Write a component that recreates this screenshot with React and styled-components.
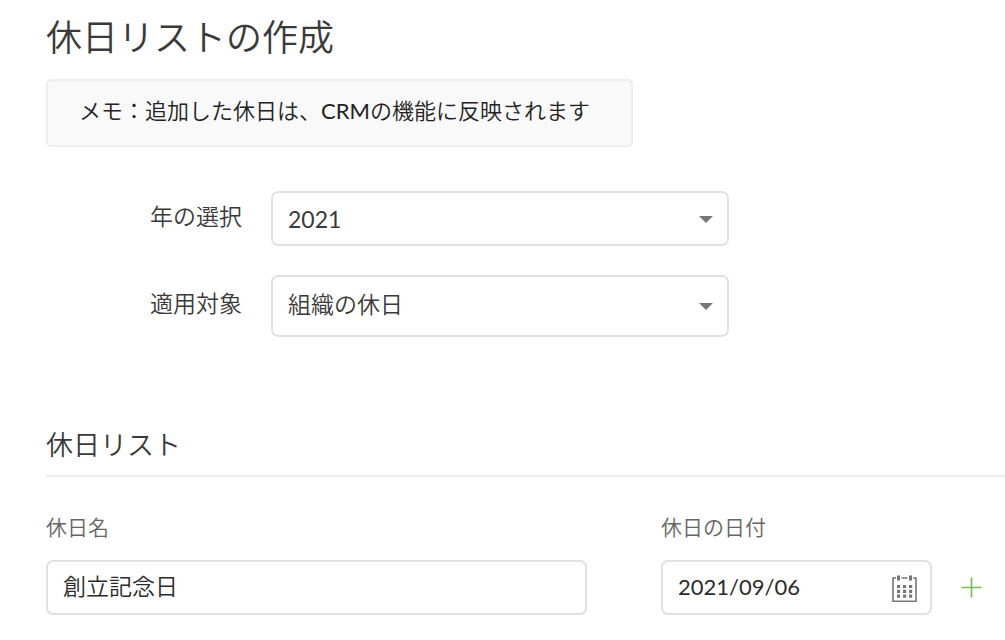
import { useState } from 'react';
import styled, { createGlobalStyle } from 'styled-components';

const GlobalStyle = createGlobalStyle`
    * {
        box-sizing: border-box;
    }

    body {
        margin: 0;
        background: #fff;
        color: #3a3a3a;
        font-family: Lato, 'Noto Sans CJK JP', sans-serif;
        font-size: 23px;
        font-weight: 350;
    }

    input,
    select,
    button {
        font: inherit;
        color: inherit;
    }
`;

const Page = styled.main`
    padding: 13px 0 25px 46px;
`;

const PageTitle = styled.h1`
    margin: 0;
    font-size: 36px;
    font-weight: 350;
    line-height: 48px;
`;

const Note = styled.p`
    width: fit-content;
    margin: 18px 0 0;
    padding: 12px 41px 16px 31px;
    border: 2px solid #eee;
    border-radius: 5px;
    background: #f9f9f9;
    color: #222;
    font-size: 22px;
    line-height: 36px;
`;

const Latin = styled.span`
    font-weight: 400;
`;

const SettingForm = styled.div`
    display: flex;
    flex-direction: column;
    gap: 29px;
    margin-top: 44px;
`;

const SettingRow = styled.div`
    display: grid;
    grid-template-columns: 196px minmax(0, 458px);
    align-items: center;
    column-gap: 29px;
`;

const SettingLabel = styled.label`
    padding-bottom: 8px;
    text-align: right;
`;

const SelectWrapper = styled.div`
    position: relative;
`;

const Select = styled.select`
    display: block;
    width: 100%;
    height: ${({ $tall }) => ($tall ? '62px' : '55px')};
    padding: ${({ $tall }) => ($tall ? '0 48px 4px 15px' : '0 48px 0 15px')};
    border: 2px solid #e1e1e1;
    border-radius: 7px;
    background: #fff;
    font-weight: ${({ $tall }) => ($tall ? 350 : 400)};
    appearance: none;
`;

const SelectArrow = styled.span`
    position: absolute;
    top: 50%;
    right: 16px;
    margin-top: -3px;
    border-top: 7px solid #777;
    border-right: 7px solid transparent;
    border-left: 7px solid transparent;
    pointer-events: none;
`;

const SectionTitle = styled.h2`
    margin: 89px 0 0;
    padding-bottom: 11px;
    border-bottom: 2px solid #ececec;
    font-size: 27px;
    font-weight: 350;
    line-height: 38px;
`;

const HolidayRow = styled.div`
    display: flex;
    align-items: flex-end;
    margin-top: 34px;
    padding-right: 23px;
`;

const Field = styled.div`
    display: flex;
    flex-direction: column;
    gap: 18px;
`;

const NameField = styled(Field)`
    flex: 1;
    min-width: 0;
    margin-right: 74px;
`;

const DateField = styled(Field)`
    width: 271px;
    margin-right: 29px;
`;

const FieldLabel = styled.label`
    color: #666;
    font-size: 21px;
    line-height: 31px;
`;

const InputBox = styled.div`
    display: flex;
    align-items: center;
    height: 55px;
    padding: 0 13px 0 15px;
    border: 2px solid #e1e1e1;
    border-radius: 7px;
`;

const Input = styled.input`
    flex: 1;
    width: 100%;
    min-width: 0;
    padding: 0 0 ${({ $japanese }) => ($japanese ? '6px' : '2px')};
    border: 0;
    background: transparent;
    color: #2b2b2b;
    font-size: ${({ $japanese }) => ($japanese ? '23px' : '22px')};
    font-weight: ${({ $japanese }) => ($japanese ? 350 : 400)};
    outline: none;
`;

const IconButton = styled.button`
    display: flex;
    align-items: center;
    flex-shrink: 0;
    padding: 0;
    border: 0;
    background: none;
    cursor: pointer;
`;

const CalendarButton = styled(IconButton)`
    padding-top: 2px;
`;

const AddButton = styled(IconButton)`
    height: 55px;
`;

function CalendarIcon() {
    return (
        <svg width="25" height="28" viewBox="0 0 25 28" fill="none">
            <path d="M4 3H1v23.3h23V3h-3M9.500 3h6" stroke="#777" strokeWidth="1.6" />
            <path d="M6.500 0.500v5M18.500 0.500v5" stroke="#777" strokeWidth="3" />
            {[11.5, 16.3, 21.1].map(y => (
                <path key={y} d={`M5 ${y}h3.2M11 ${y}h3.2M17 ${y}h3.2`} stroke="#777" strokeWidth="3.2" />
            ))}
        </svg>
    );
}

function PlusIcon() {
    return (
        <svg width="21" height="21" viewBox="0 0 21 21" fill="none">
            <path d="M10.5 0.5v20M0.5 10.5h20" stroke="#7dbd50" strokeWidth="1.7" />
        </svg>
    );
}

export default function HolidayListPage() {
    const [year, setYear] = useState('2021');
    const [target, setTarget] = useState('organization');
    const [name, setName] = useState('創立記念日');
    const [date, setDate] = useState('2021/09/06');

    return (
        <>
            <GlobalStyle />
            <Page>
                <PageTitle>休日リストの作成</PageTitle>
                <Note>
                    メモ：追加した休日は、<Latin>CRM</Latin>の機能に反映されます
                </Note>
                <SettingForm>
                    <SettingRow>
                        <SettingLabel htmlFor="year">年の選択</SettingLabel>
                        <SelectWrapper>
                            <Select id="year" value={year} onChange={e => setYear(e.target.value)}>
                                <option value="2021">2021</option>
                            </Select>
                            <SelectArrow />
                        </SelectWrapper>
                    </SettingRow>
                    <SettingRow>
                        <SettingLabel htmlFor="target">適用対象</SettingLabel>
                        <SelectWrapper>
                            <Select
                                id="target"
                                $tall
                                value={target}
                                onChange={e => setTarget(e.target.value)}
                            >
                                <option value="organization">組織の休日</option>
                            </Select>
                            <SelectArrow />
                        </SelectWrapper>
                    </SettingRow>
                </SettingForm>
                <SectionTitle>休日リスト</SectionTitle>
                <HolidayRow>
                    <NameField>
                        <FieldLabel htmlFor="holiday-name">休日名</FieldLabel>
                        <InputBox>
                            <Input
                                id="holiday-name"
                                $japanese
                                value={name}
                                onChange={e => setName(e.target.value)}
                            />
                        </InputBox>
                    </NameField>
                    <DateField>
                        <FieldLabel htmlFor="holiday-date">休日の日付</FieldLabel>
                        <InputBox>
                            <Input
                                id="holiday-date"
                                value={date}
                                onChange={e => setDate(e.target.value)}
                            />
                            <CalendarButton type="button" aria-label="日付を選択">
                                <CalendarIcon />
                            </CalendarButton>
                        </InputBox>
                    </DateField>
                    <AddButton type="button" aria-label="追加">
                        <PlusIcon />
                    </AddButton>
                </HolidayRow>
            </Page>
        </>
    );
}
